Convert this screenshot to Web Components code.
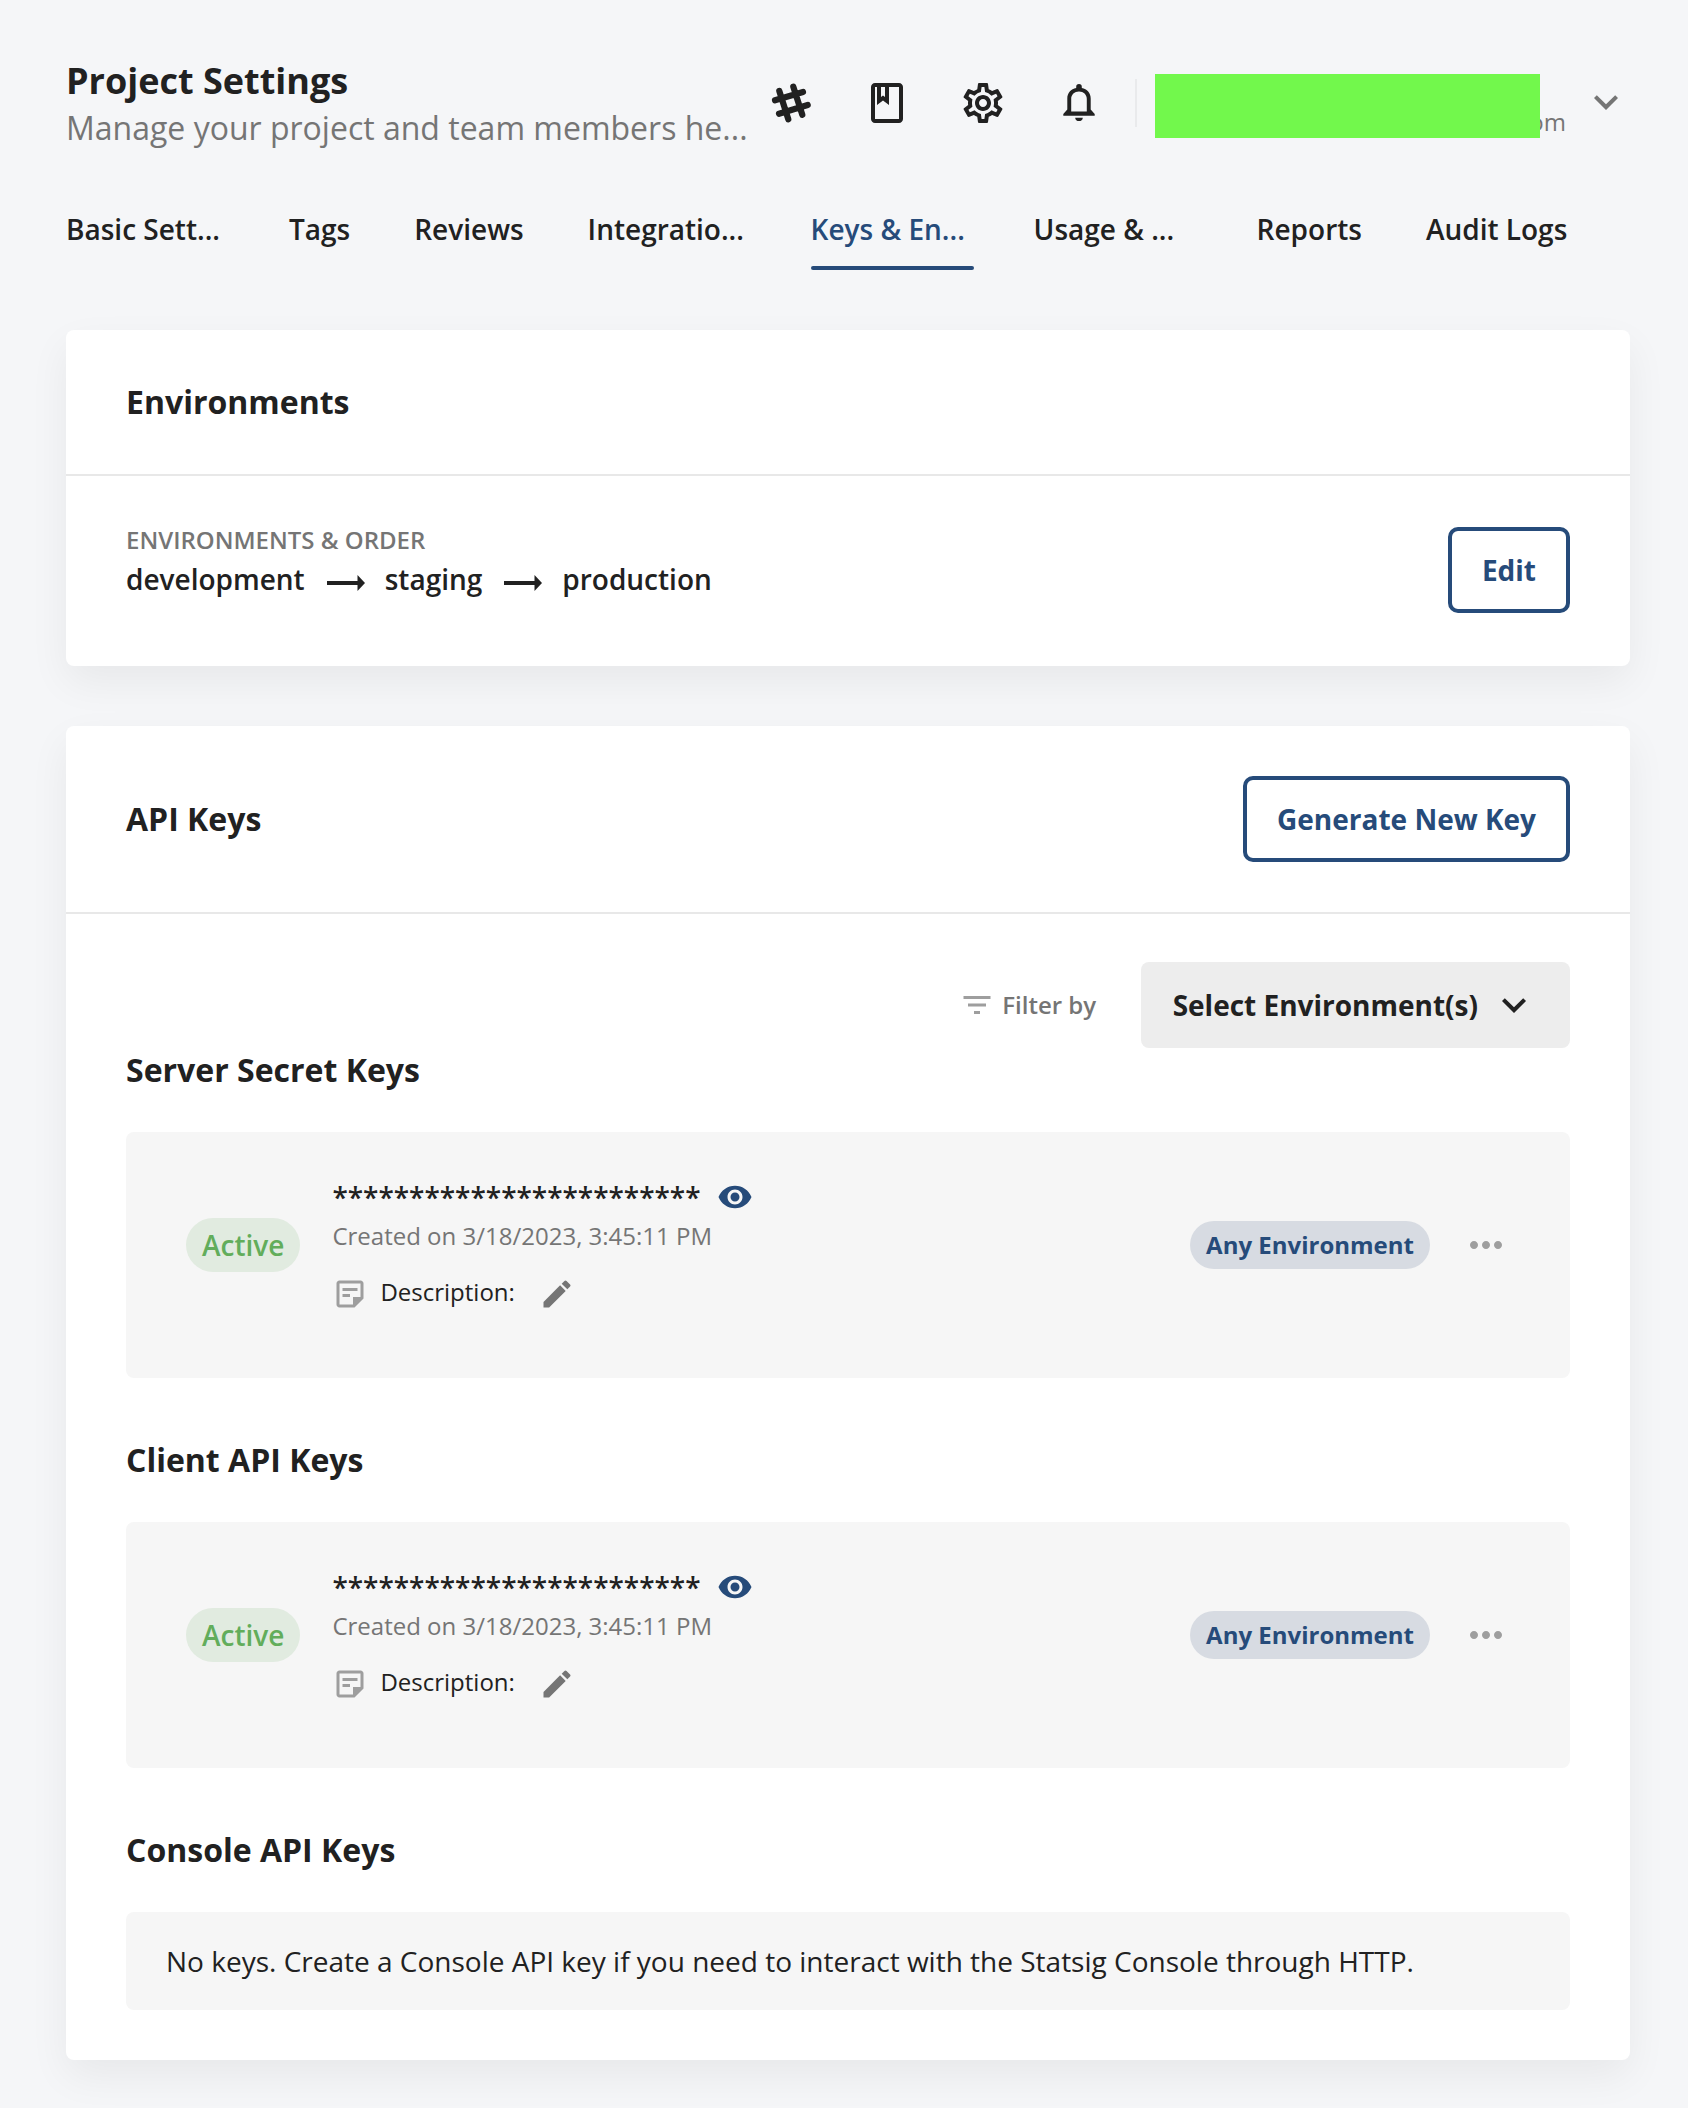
<!DOCTYPE html>
<html lang="en">
<head>
<meta charset="utf-8">
<title>Project Settings</title>
<style>
:root{--ink:#212121;--muted:#757575;--faint:#9e9e9e;--blue:#264b7a;--line:#e8e8e8;--soft:#f6f6f6}
body{margin:0;background:#f5f6f8;color:var(--ink);font-family:"Open Sans",sans-serif}
</style>
</head>
<body>
<settings-page></settings-page>
<script>
const ICONS={
hash:'<path transform="translate(2 2) scale(.5)" fill="none" stroke="currentColor" stroke-width="6.2" stroke-linecap="round" d="M4 17.3 32 9M8 30.7 36.7 22M8.3 8l9 28.3M22.3 3.7l9 28"/>',
book:'<path d="M18 2H6c-1.1 0-2 .9-2 2v16c0 1.1.9 2 2 2h12c1.1 0 2-.9 2-2V4c0-1.1-.9-2-2-2zM9 4h2v5l-1-.75L9 9V4zm9 16H6V4h1v9l3-2.25L13 13V4h5v16z"/>',
gear:'<path d="M19.43 12.98c.04-.32.07-.64.07-.98 0-.34-.03-.66-.07-.98l2.11-1.65c.19-.15.24-.42.12-.64l-2-3.46c-.09-.16-.26-.25-.44-.25-.06 0-.12.01-.17.03l-2.49 1c-.52-.4-1.08-.73-1.69-.98l-.38-2.65C14.46 2.18 14.25 2 14 2h-4c-.25 0-.46.18-.49.42l-.38 2.65c-.61.25-1.17.59-1.69.98l-2.49-1c-.06-.02-.12-.03-.18-.03-.17 0-.34.09-.43.25l-2 3.46c-.13.22-.07.49.12.64l2.11 1.65c-.04.32-.07.65-.07.98 0 .33.03.66.07.98l-2.11 1.65c-.19.15-.24.42-.12.64l2 3.46c.09.16.26.25.44.25.06 0 .12-.01.17-.03l2.49-1c.52.4 1.08.73 1.69.98l.38 2.65c.03.24.24.42.49.42h4c.25 0 .46-.18.49-.42l.38-2.65c.61-.25 1.17-.59 1.69-.98l2.49 1c.06.02.12.03.18.03.17 0 .34-.09.43-.25l2-3.46c.12-.22.07-.49-.12-.64l-2.11-1.65zm-1.98-1.71c.04.31.05.52.05.73 0 .21-.02.43-.05.73l-.14 1.13.89.7 1.08.84-.7 1.21-1.27-.51-1.04-.42-.9.68c-.43.32-.84.56-1.25.73l-1.06.43-.16 1.13-.2 1.35h-1.4l-.19-1.35-.16-1.13-1.06-.43c-.43-.18-.83-.41-1.23-.71l-.91-.7-1.06.43-1.27.51-.7-1.21 1.08-.84.89-.7-.14-1.13c-.03-.31-.05-.54-.05-.74s.02-.43.05-.73l.14-1.13-.89-.7-1.08-.84.7-1.21 1.27.51 1.04.42.9-.68c.43-.32.84-.56 1.25-.73l1.06-.43.16-1.13.2-1.35h1.39l.19 1.35.16 1.13 1.06.43c.43.18.83.41 1.23.71l.91.7 1.06-.43 1.27-.51.7 1.21-1.07.85-.89.7.14 1.13zM12 8c-2.21 0-4 1.79-4 4s1.79 4 4 4 4-1.79 4-4-1.79-4-4-4zm0 6c-1.1 0-2-.9-2-2s.9-2 2-2 2 .9 2 2-.9 2-2 2z"/>',
bell:'<path transform="translate(4 2) scale(.5)" fill-rule="evenodd" d="M.3 32.7v-1.6l4-4.6V15.5C4.3 10 8 5.9 13.2 5V3.8a2.8 2.8 0 0 1 5.6 0V5C24 5.9 27.7 10 27.7 15.5v11l4 4.6v1.6zM8.2 28.6h15.6V16c0-4.4-3.3-7.4-7.8-7.4S8.2 11.6 8.2 16zM12.2 34.7h7.6c0 2.1-1.7 3.4-3.8 3.4s-3.8-1.3-3.8-3.4z"/>',
chevron:'<path d="M16.59 8.59 12 13.17 7.41 8.59 6 10l6 6 6-6z"/>',
filter:'<path d="M10 18h4v-2h-4v2zM3 6v2h18V6H3zm3 7h12v-2H6v2z"/>',
eye:'<path d="M12 4.5C7 4.5 2.73 7.61 1 12c1.73 4.39 6 7.5 11 7.5s9.27-3.11 11-7.5c-1.73-4.39-6-7.5-11-7.5zM12 17c-2.76 0-5-2.24-5-5s2.24-5 5-5 5 2.24 5 5-2.24 5-5 5zm0-8c-1.66 0-3 1.34-3 3s1.34 3 3 3 3-1.34 3-3-1.34-3-3-3z"/>',
note:'<path d="M19 3H4.99C3.89 3 3 3.9 3 5l.01 14c0 1.1.89 2 1.99 2h10l6-6V5c0-1.1-.9-2-2-2zM5 5h14v9h-5v5H5V5zm7 9H7v-2h5v2zm5-4H7V8h10v2z"/>',
pencil:'<path d="M3 17.25V21h3.75L17.81 9.94l-3.75-3.75L3 17.25zM20.71 7.04c.39-.39.39-1.02 0-1.41l-2.34-2.34a.996.996 0 0 0-1.41 0l-1.83 1.83 3.75 3.75 1.83-1.83z"/>',
dots:'<path d="M6 10c-1.1 0-2 .9-2 2s.9 2 2 2 2-.9 2-2-.9-2-2-2zm12 0c-1.1 0-2 .9-2 2s.9 2 2 2 2-.9 2-2-.9-2-2-2zm-6 0c-1.1 0-2 .9-2 2s.9 2 2 2 2-.9 2-2-.9-2-2-2z"/>'
};
function define(name,html){
  customElements.define(name,class extends HTMLElement{
    constructor(){super();this.attachShadow({mode:'open'}).innerHTML=typeof html==='string'?html:'';}
    connectedCallback(){if(typeof html==='function')this.shadowRoot.innerHTML=html(this);}
  });
}

define('ui-icon',el=>`<style>:host{display:block;flex:none;width:var(--size,48px);height:var(--size,48px)}svg{display:block;width:100%;height:100%;fill:currentColor}</style>
<svg viewBox="0 0 24 24">${ICONS[el.getAttribute('name')]}</svg>`);

define('flow-arrow',`<style>:host{display:block;margin:8px 20px 0 22px}svg{display:block}</style>
<svg width="38" height="16" viewBox="0 0 38 16"><path fill="currentColor" d="M0 6h30.5V0L38 8l-7.5 8v-6H0z"/></svg>`);

define('ui-button',`<style>:host{display:block;flex:none}
button{display:block;box-sizing:border-box;height:86px;padding:0 30px;border:4px solid var(--blue);border-radius:10px;background:#fff;color:var(--blue);font:700 28px/38px "Open Sans",sans-serif}</style>
<button><slot></slot></button>`);

define('ui-select',`<style>:host{display:flex;align-items:center;gap:12px;height:86px;padding:0 32px;border-radius:8px;background:#ededed;font:700 28px/38px "Open Sans",sans-serif}</style>
<slot></slot><ui-icon name="chevron"></ui-icon>`);

define('ui-pill',`<style>:host{display:flex;align-items:center;justify-content:center;flex:none;box-sizing:border-box;padding:0 16px;height:48px;border-radius:27px;background:#d7dbe2;color:var(--blue);font:700 24px/36px "Open Sans",sans-serif}
:host([active]){height:54px;background:#e1ebe0;color:#62ad5b;font:600 28px/38px "Open Sans",sans-serif}</style><slot></slot>`);

define('page-header',`<style>
:host{display:flex;height:96px;align-items:flex-start}
.titles{width:701px;flex:none;white-space:nowrap}
h1{margin:0 0 -2px;font:700 36px/50px "Open Sans",sans-serif}
p{margin:0;color:var(--muted);font:400 32px/48px "Open Sans",sans-serif}
.icons{display:flex;gap:48px;margin-top:23px}
.rule{width:2px;height:48px;margin:23px 18px 0 32px;background:#e9eaec}
.user{position:relative;width:411px;height:64px;margin-top:18px;display:flex;align-items:flex-end;justify-content:flex-end;color:var(--muted);font:400 24px/32px "Open Sans",sans-serif}
.mask{position:absolute;left:0;top:0;width:385px;height:64px;background:#72f84c}
.caret{margin:22px 0 0 16px;color:var(--muted)}
</style>
<div class="titles"><h1>Project Settings</h1><p>Manage your project and team members he...</p></div>
<div class="icons"><ui-icon name="hash"></ui-icon><ui-icon name="book"></ui-icon><ui-icon name="gear"></ui-icon><ui-icon name="bell"></ui-icon></div>
<div class="rule"></div>
<div class="user"><span>om</span><div class="mask"></div></div>
<ui-icon class="caret" name="chevron"></ui-icon>`);

define('nav-tab',`<style>:host{display:block;flex:none;white-space:nowrap;font:600 28px/40px "Open Sans",sans-serif}
:host([wide]){width:159px}
:host([current]){color:var(--blue)}
i{display:block;height:4px;margin:17px -4px 0 0;border-radius:2px}
:host([current]) i{background:var(--blue)}</style><slot></slot><i></i>`);

define('nav-tabs',`<style>:host{display:flex;gap:64px;margin-top:57px}</style>
<nav-tab wide>Basic Sett...</nav-tab><nav-tab>Tags</nav-tab><nav-tab>Reviews</nav-tab><nav-tab wide>Integratio...</nav-tab><nav-tab wide current>Keys &amp; En...</nav-tab><nav-tab wide>Usage &amp; ...</nav-tab><nav-tab>Reports</nav-tab><nav-tab>Audit Logs</nav-tab>`);

define('settings-card',`<style>
:host{display:block;margin-top:60px;border-radius:8px;background:#fff;box-shadow:0 16px 40px rgba(0,0,0,.06)}
header{display:flex;align-items:center;justify-content:space-between;box-sizing:content-box;height:var(--head,144px);padding:0 60px;border-bottom:2px solid var(--line);font:700 32px/44px "Open Sans",sans-serif}
</style><header><slot name="title"></slot><slot name="action"></slot></header><slot></slot>`);

define('environment-order',`<style>
:host{display:flex;align-items:flex-start;justify-content:space-between;box-sizing:border-box;height:190px;padding:46px 60px 0}
.label{color:var(--muted);font:600 24px/36px "Open Sans",sans-serif}
.flow{display:flex;align-items:center;font:600 28px/42px "Open Sans",sans-serif}
ui-button{margin-top:5px}
</style>
<div><div class="label">ENVIRONMENTS &amp; ORDER</div><div class="flow"><span>development</span><flow-arrow></flow-arrow><span>staging</span><flow-arrow></flow-arrow><span>production</span></div></div>
<ui-button>Edit</ui-button>`);

define('key-filter',`<style>
:host{display:flex;align-items:center;justify-content:flex-end}
.by{display:flex;align-items:center;gap:7.5px;margin-right:44.5px;color:var(--muted);font:600 24px/36px "Open Sans",sans-serif}
ui-icon{--size:36px;color:var(--faint)}
</style><div class="by"><ui-icon name="filter"></ui-icon><span>Filter by</span></div><ui-select>Select Environment(s)</ui-select>`);

define('key-section',`<style>
:host{display:block;margin-bottom:60px}
:host(:last-of-type){margin-bottom:0}
h2{margin:0 0 40px;font:700 32px/44px "Open Sans",sans-serif}
</style><h2><slot name="heading"></slot></h2><slot></slot>`);

define('key-row',`<style>
:host{display:flex;align-items:center;box-sizing:border-box;height:246px;padding:0 60px 20px;border-radius:8px;background:var(--soft)}
.info{flex:1;height:136px;margin-left:32px;white-space:nowrap}
.secret{display:flex;align-items:center;gap:16px;font:600 28px/40px "Open Sans",sans-serif}
.secret ui-icon{--size:36px;color:var(--blue)}
.made{margin-top:1px;color:var(--muted);font:400 24px/36px "Open Sans",sans-serif}
.desc{display:flex;align-items:flex-start;margin-top:20px;font:400 24px/36px "Open Sans",sans-serif}
.desc ui-icon{--size:36px;margin-top:2px}
.note{margin-right:12px;color:var(--faint)}
.edit{margin-left:24px;color:var(--muted)}
.more{margin-left:32px;color:var(--faint)}
</style>
<ui-pill active>Active</ui-pill>
<div class="info">
<div class="secret"><span>************************</span><ui-icon name="eye"></ui-icon></div>
<div class="made">Created on 3/18/2023, 3:45:11 PM</div>
<div class="desc"><ui-icon class="note" name="note"></ui-icon><span>Description:</span><ui-icon class="edit" name="pencil"></ui-icon></div>
</div>
<ui-pill>Any Environment</ui-pill><ui-icon class="more" name="dots"></ui-icon>`);

define('empty-row',`<style>:host{display:flex;align-items:center;height:98px;padding:0 40px;border-radius:8px;background:var(--soft);font:400 28px/38px "Open Sans",sans-serif}</style><slot></slot>`);

define('settings-page',`<style>
:host{display:block;box-sizing:border-box;width:1688px;height:2108px;padding:56px 58px 0 66px}
.keys{--head:186px}
.body{padding:48px 60px 50px}
</style>
<page-header></page-header>
<nav-tabs></nav-tabs>
<settings-card><span slot="title">Environments</span><environment-order></environment-order></settings-card>
<settings-card class="keys"><span slot="title">API Keys</span><ui-button slot="action">Generate New Key</ui-button>
<div class="body">
<key-filter></key-filter>
<key-section><span slot="heading">Server Secret Keys</span><key-row></key-row></key-section>
<key-section><span slot="heading">Client API Keys</span><key-row></key-row></key-section>
<key-section><span slot="heading">Console API Keys</span><empty-row>No keys. Create a Console API key if you need to interact with the Statsig Console through HTTP.</empty-row></key-section>
</div></settings-card>`);
</script>
</body>
</html>
